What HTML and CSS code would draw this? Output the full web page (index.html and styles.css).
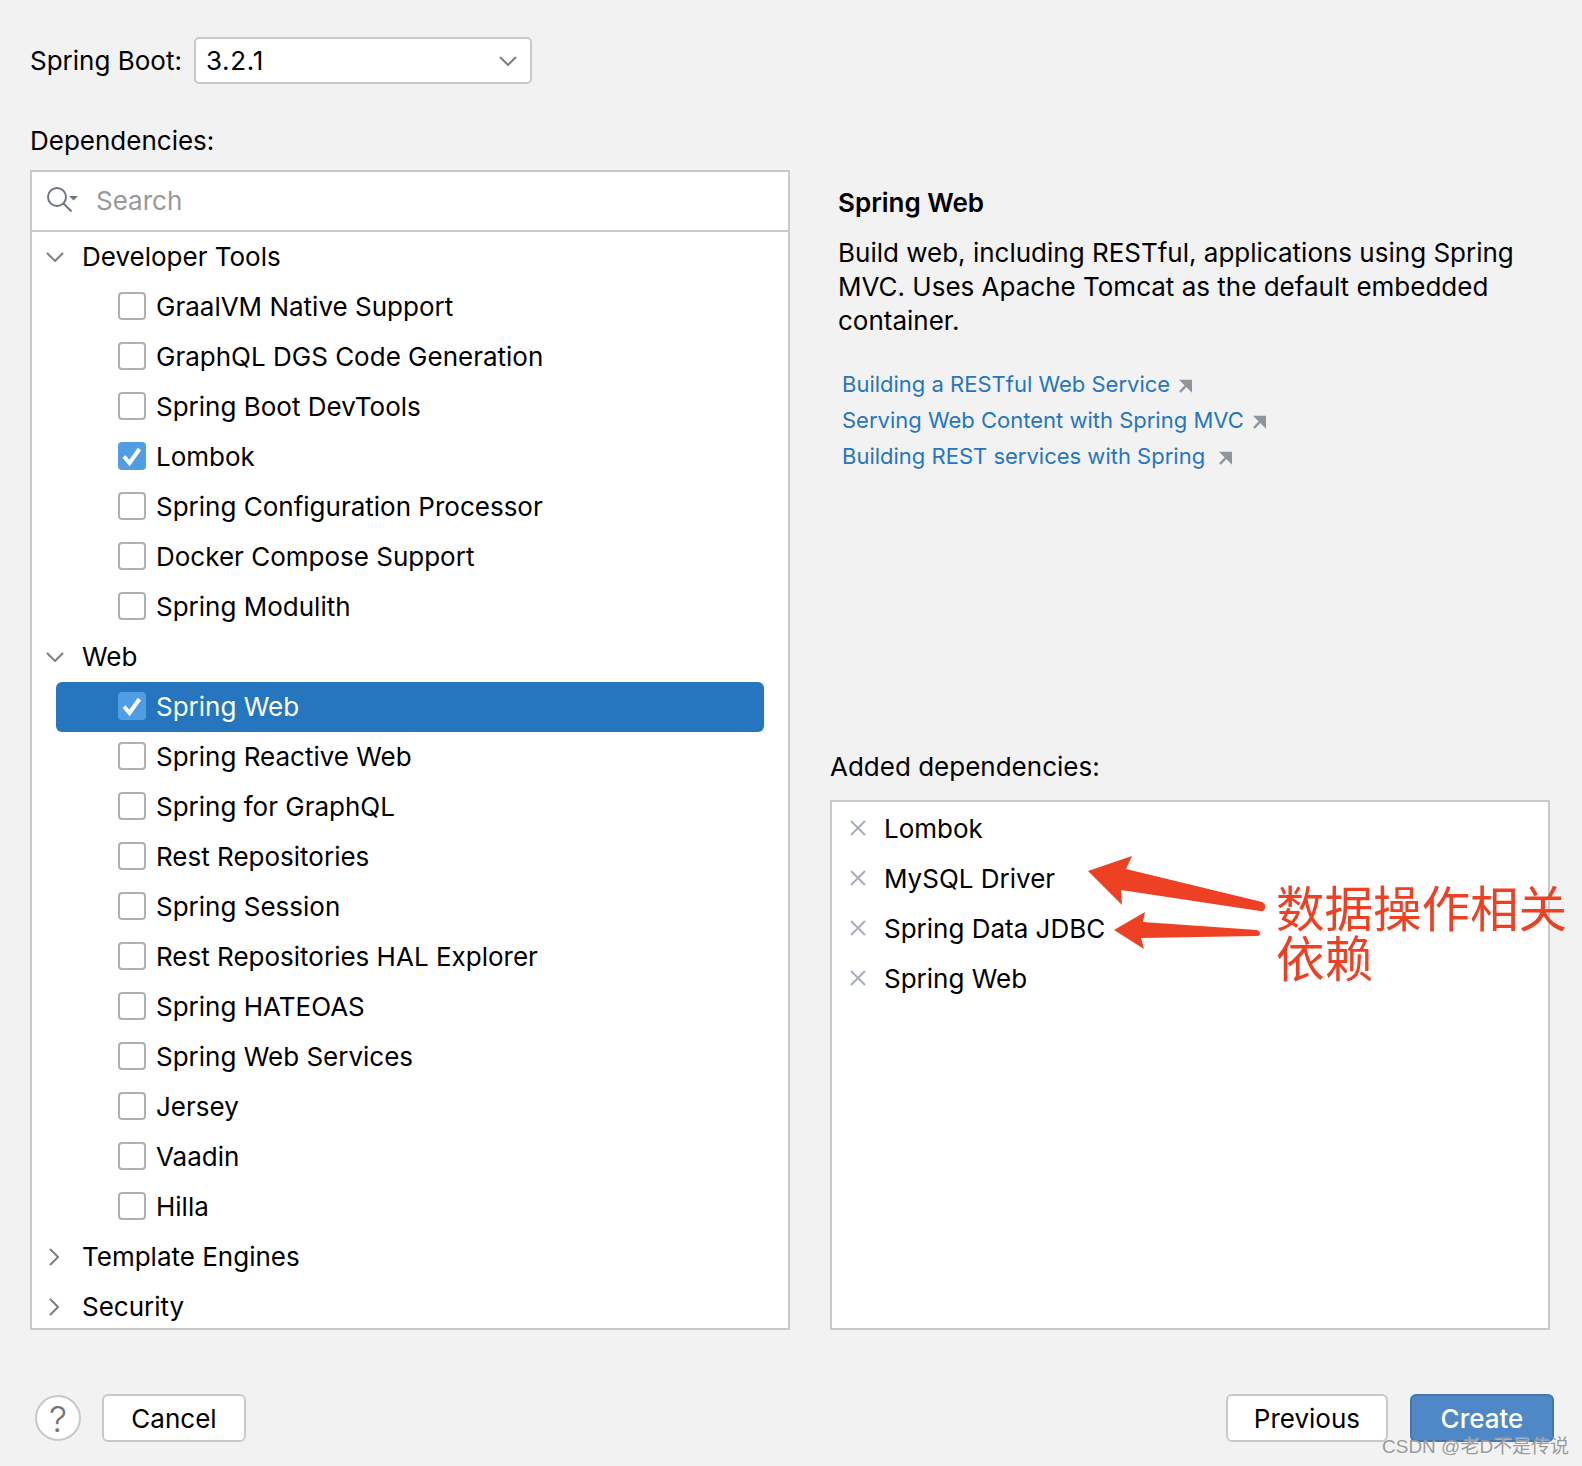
FILE: index.html
```html
<!DOCTYPE html>
<html lang="en">
<head>
  <meta charset="UTF-8" />
  <title>New Project</title>
  <link rel="stylesheet" href="styles.css">
</head>
<body>
  <div class="dialog">
    <div class="boot-row">
      <label class="boot-label">Spring Boot:</label>
      <div class="combo">
        <span>3.2.1</span>
        <svg class="combo-arrow" width="18" height="10" viewBox="0 0 18 10"><path d="M1 1l8 8 8-8" /></svg>
      </div>
    </div>

    <div class="deps-label">Dependencies:</div>

    <div class="columns">
      <div class="tree-box">
        <div class="search">
          <svg class="search-icon" width="34" height="28" viewBox="0 0 34 28">
            <circle cx="12" cy="11" r="9" />
            <path d="M18.5 17.5l8 8" />
            <path class="search-caret" d="M24 10h9l-4.500 4.500z" />
          </svg>
          <span>Search</span>
        </div>
        <div class="tree">
          <div class="row group"><svg class="chev" width="18" height="10" viewBox="0 0 18 10"><path d="M1 1l8 8 8-8" /></svg>Developer Tools</div>
          <div class="row item"><i class="box"></i>GraalVM Native Support</div>
          <div class="row item"><i class="box"></i>GraphQL DGS Code Generation</div>
          <div class="row item"><i class="box"></i>Spring Boot DevTools</div>
          <div class="row item"><i class="box checked"><svg width="28" height="28" viewBox="0 0 28 28"><path d="M6 14.500l5.500 6.500 10-14" /></svg></i>Lombok</div>
          <div class="row item"><i class="box"></i>Spring Configuration Processor</div>
          <div class="row item"><i class="box"></i>Docker Compose Support</div>
          <div class="row item"><i class="box"></i>Spring Modulith</div>
          <div class="row group"><svg class="chev" width="18" height="10" viewBox="0 0 18 10"><path d="M1 1l8 8 8-8" /></svg>Web</div>
          <div class="row item selected"><i class="box checked"><svg width="28" height="28" viewBox="0 0 28 28"><path d="M6 14.500l5.500 6.500 10-14" /></svg></i>Spring Web</div>
          <div class="row item"><i class="box"></i>Spring Reactive Web</div>
          <div class="row item"><i class="box"></i>Spring for GraphQL</div>
          <div class="row item"><i class="box"></i>Rest Repositories</div>
          <div class="row item"><i class="box"></i>Spring Session</div>
          <div class="row item"><i class="box"></i>Rest Repositories HAL Explorer</div>
          <div class="row item"><i class="box"></i>Spring HATEOAS</div>
          <div class="row item"><i class="box"></i>Spring Web Services</div>
          <div class="row item"><i class="box"></i>Jersey</div>
          <div class="row item"><i class="box"></i>Vaadin</div>
          <div class="row item"><i class="box"></i>Hilla</div>
          <div class="row group"><svg class="chev closed" width="10" height="18" viewBox="0 0 10 18"><path d="M1 1l8 8-8 8" /></svg>Template Engines</div>
          <div class="row group"><svg class="chev closed" width="10" height="18" viewBox="0 0 10 18"><path d="M1 1l8 8-8 8" /></svg>Security</div>
        </div>
      </div>

      <div class="side">
        <div class="details">
          <h2>Spring Web</h2>
          <p>Build web, including RESTful, applications using Spring MVC. Uses Apache Tomcat as the default embedded container.</p>
          <ul class="links">
            <li><a href="#">Building a RESTful Web Service</a><svg class="ext" width="14" height="14" viewBox="0 0 14 14"><path d="M2 13L10 4.500M4 2h9v9z" /></svg></li>
            <li><a href="#">Serving Web Content with Spring MVC</a><svg class="ext" width="14" height="14" viewBox="0 0 14 14"><path d="M2 13L10 4.500M4 2h9v9z" /></svg></li>
            <li><a href="#">Building REST services with Spring</a><svg class="ext wide" width="14" height="14" viewBox="0 0 14 14"><path d="M2 13L10 4.500M4 2h9v9z" /></svg></li>
          </ul>
        </div>
        <div class="added-label">Added dependencies:</div>
        <div class="added">
          <div class="added-row"><svg class="remove" width="16" height="16" viewBox="0 0 16 16"><path d="M1 1l14 14M15 1L1 15" /></svg>Lombok</div>
          <div class="added-row"><svg class="remove" width="16" height="16" viewBox="0 0 16 16"><path d="M1 1l14 14M15 1L1 15" /></svg>MySQL Driver</div>
          <div class="added-row"><svg class="remove" width="16" height="16" viewBox="0 0 16 16"><path d="M1 1l14 14M15 1L1 15" /></svg>Spring Data JDBC</div>
          <div class="added-row"><svg class="remove" width="16" height="16" viewBox="0 0 16 16"><path d="M1 1l14 14M15 1L1 15" /></svg>Spring Web</div>
        </div>
      </div>
    </div>

    <div class="footer">
      <div class="footer-left">
        <button class="help">?</button>
        <button class="btn">Cancel</button>
      </div>
      <div class="footer-right">
        <button class="btn">Previous</button>
        <button class="btn primary">Create</button>
      </div>
    </div>
  </div>

  <!-- red markup drawn over the screenshot -->
  <svg class="arrows" width="1582" height="1466" viewBox="0 0 1582 1466">
    <path d="M1088 871L1132 856 1126 869 1262 902Q1266 904 1265 908 1264 912 1260 911L1121 890 1122 905z" />
    <path d="M1114 930L1145 912 1143 922 1257 930Q1260 931 1260 933 1260 936 1257 936L1141 938 1144 949z" />
  </svg>
  <div class="note">数据操作相关<br>依赖</div>
  <div class="watermark">CSDN @老D不是传说</div>
</body>
</html>
```

FILE: styles.css
```css
:root {
  --bg: #f2f2f2;
  --border: #c9c9c9;
  --text: #000;
  --blue: #2675bf;
}

* {
  margin: 0;
  padding: 0;
  box-sizing: border-box;
}

body {
  background: var(--bg);
  color: var(--text);
  font-family: Inter, "Noto Sans CJK SC", sans-serif;
  font-size: 26px;
  width: 1582px;
  height: 1466px;
  overflow: hidden;
  position: relative;
}

.dialog {
  padding: 37px 28px 0 30px;
}

.boot-row {
  display: flex;
  align-items: center;
  gap: 12px;
}

.combo {
  width: 338px;
  height: 47px;
  background: #fff;
  border: 2px solid var(--border);
  border-radius: 5px;
  display: flex;
  align-items: center;
  justify-content: space-between;
  padding: 0 13px 0 10px;
  letter-spacing: 0.7px;
}

.combo-arrow path,
.chev path {
  fill: none;
  stroke: #7f7f7f;
  stroke-width: 2;
}

.deps-label {
  height: 34px;
  line-height: 34px;
  margin-top: 40px;
  margin-bottom: 12px;
}

.columns {
  display: flex;
  gap: 40px;
}

.tree-box {
  width: 760px;
  height: 1160px;
  background: #fff;
  border: 2px solid var(--border);
  display: flex;
  flex-direction: column;
}

.search {
  height: 60px;
  flex: none;
  display: flex;
  align-items: center;
  border-bottom: 2px solid var(--border);
  padding-left: 13px;
  padding-bottom: 2px;
  gap: 17px;
  color: #999;
}

.search-icon circle,
.search-icon path {
  fill: none;
  stroke: #6e7585;
  stroke-width: 2;
}

.search-icon .search-caret {
  fill: #6e7585;
  stroke: none;
}

.tree {
  flex: 1;
  overflow: hidden;
}

.row {
  height: 50px;
  padding-bottom: 2px;
  display: flex;
  align-items: center;
  white-space: nowrap;
}

.group {
  padding-left: 50px;
  position: relative;
}

.chev {
  position: absolute;
  left: 14px;
  top: 20px;
}

.chev.closed {
  left: 17px;
  top: 16px;
}

.item {
  margin-left: 24px;
  margin-right: 24px;
  border-radius: 6px;
  padding-left: 62px;
}

.selected {
  background: var(--blue);
  color: #fff;
}

.box {
  width: 28px;
  height: 28px;
  background: #fff;
  border: 2px solid #b0b0b0;
  border-radius: 4px;
  margin-right: 10px;
  flex: none;
  position: relative;
}

.box.checked {
  background: #4f9ee3;
  border: none;
}

.box svg {
  display: block;
}

.box svg path {
  fill: none;
  stroke: #fff;
  stroke-width: 4;
}

.side {
  width: 720px;
}

.details {
  height: 579px;
  padding: 15px 0 0 8px;
}

.details h2 {
  font-size: 26px;
  font-weight: 600;
  line-height: 36px;
  margin-bottom: 15px;
}

.details p {
  line-height: 34px;
}

.links {
  list-style: none;
  margin-top: 28px;
  padding-left: 4px;
  font-size: 22px;
}

.links li {
  height: 36px;
  display: flex;
  align-items: center;
}

.links a {
  color: var(--blue);
  text-decoration: none;
}

.ext {
  margin-left: 8px;
  margin-top: 3px;
}

.ext.wide {
  margin-left: 13px;
}

.ext path {
  fill: #8f959c;
  stroke: #8f959c;
  stroke-width: 2.500;
}

.added-label {
  height: 34px;
  line-height: 34px;
  margin-top: 1px;
  margin-bottom: 16px;
}

.added {
  height: 530px;
  background: #fff;
  border: 2px solid var(--border);
  padding-top: 1px;
}

.added-row {
  height: 50px;
  display: flex;
  align-items: center;
  padding-left: 18px;
  gap: 18px;
}

.remove path {
  fill: none;
  stroke: #a7adbd;
  stroke-width: 2;
}

.footer {
  display: flex;
  justify-content: space-between;
  align-items: center;
  margin-top: 64px;
}

.footer-left,
.footer-right {
  display: flex;
  align-items: center;
}

.footer-left {
  gap: 21px;
  padding-left: 5px;
}

.footer-right {
  gap: 22px;
}

.btn {
  font: inherit;
  color: var(--text);
  height: 48px;
  background: #fff;
  border: 2px solid var(--border);
  border-radius: 6px;
  padding: 1px 26px 0;
  min-width: 144px;
}

.primary {
  background: #4f88c7;
  border-color: #4376b2;
  color: #fff;
  font-weight: 500;
}

.help {
  font: inherit;
  font-size: 36px;
  font-weight: 300;
  width: 46px;
  height: 46px;
  border-radius: 50%;
  background: #fff;
  border: 2px solid var(--border);
  color: #6e7585;
}

/* overlays */
.arrows {
  position: absolute;
  left: 0;
  top: 0;
  pointer-events: none;
}

.arrows path {
  fill: #ee4124;
}

.note {
  position: absolute;
  left: 1276px;
  top: 881px;
  font-size: 48.500px;
  line-height: 50px;
  color: #ee4124;
  font-family: "Noto Sans CJK SC", sans-serif;
  white-space: nowrap;
}

.watermark {
  position: absolute;
  left: 1382px;
  top: 1431px;
  font-size: 19px;
  color: #9a9a9a;
  font-family: "Liberation Sans", "Noto Sans CJK SC", sans-serif;
  white-space: nowrap;
  text-shadow: 1px 1px 1px rgba(255, 255, 255, 0.5);
}
```
